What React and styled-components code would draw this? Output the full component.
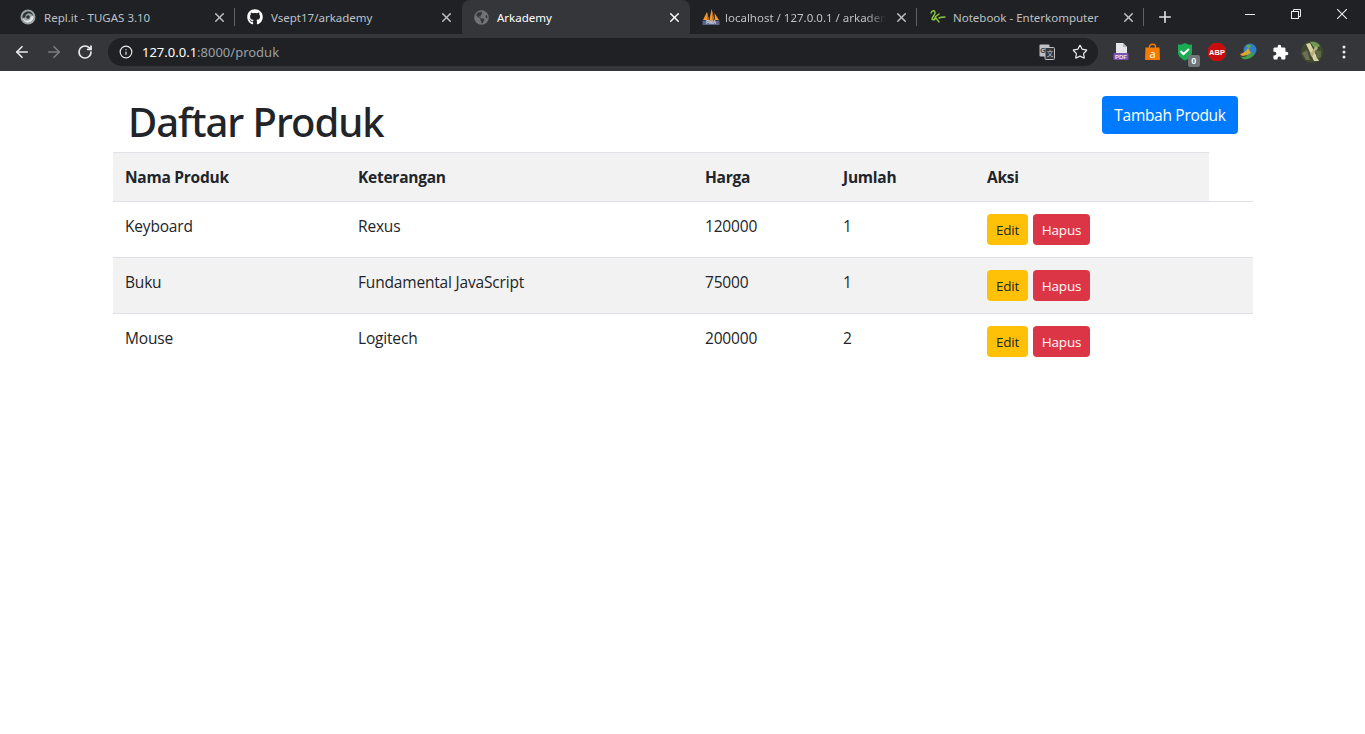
import React from 'react';
import styled, { createGlobalStyle } from 'styled-components';
import { FaGithub, FaGlobeAmericas } from 'react-icons/fa';
import { ArrowLeft, ArrowRight, RotateCw, Info, Star, X, Plus } from 'lucide-react';

const GlobalStyle = createGlobalStyle`
  html, body {
    margin: 0;
    padding: 0;
    background: #fff;
  }
  body {
    font-family: "Open Sans", "Liberation Sans", sans-serif;
    color: #212529;
  }
  svg {
    flex-shrink: 0;
  }
`;

const Screen = styled.div`
  height: 734px;
  overflow: hidden;
`;

const TabStrip = styled.div`
  display: flex;
  align-items: stretch;
  height: 34px;
  padding-left: 8px;
  background: #202124;
`;

const Tab = styled.div`
  display: flex;
  align-items: center;
  position: relative;
  box-sizing: border-box;
  width: ${(props) => props.width || 227}px;
  padding: 0 8px 0 12px;
  gap: 8px;
  background: ${(props) => (props.active ? '#35363a' : 'transparent')};
  border-radius: ${(props) => (props.active ? '8px 8px 0 0' : '0')};
  color: ${(props) => (props.active ? '#fff' : '#bdc1c6')};
  font-family: "Noto Sans", sans-serif;
  font-size: 11.5px;
  &::after {
    content: '';
    display: ${(props) => (props.divider ? 'block' : 'none')};
    position: absolute;
    right: 0;
    top: 8px;
    bottom: 8px;
    width: 1px;
    background: #5f6368;
  }
`;

const TabTitle = styled.span`
  flex: 1;
  overflow: hidden;
  white-space: nowrap;
  margin-left: ${(props) => props.shift || 0}px;
  mask-image: ${(props) => (props.fade ? 'linear-gradient(to right, #000 88%, transparent 100%)' : 'none')};
`;

const NewTab = styled.div`
  display: flex;
  align-items: center;
  margin-left: 12px;
  color: #dee1e6;
`;

const WindowControls = styled.div`
  display: flex;
  align-items: center;
  margin-left: auto;
  height: 28px;
  color: #e8eaed;
`;

const WindowButton = styled.div`
  display: flex;
  align-items: center;
  justify-content: center;
  width: 46px;
`;

const Toolbar = styled.div`
  display: flex;
  align-items: center;
  box-sizing: border-box;
  height: 37px;
  padding: 0 0 1px 13px;
  background: #35363a;
`;

const NavIcons = styled.div`
  display: flex;
  align-items: center;
  gap: 14px;
  color: #e8eaed;
  width: 95px;
`;

const Omnibox = styled.div`
  display: flex;
  align-items: center;
  box-sizing: border-box;
  width: 990px;
  height: 28px;
  padding: 0 10px 0 11px;
  border-radius: 14px;
  background: #202124;
  color: #e8eaed;
`;

const Url = styled.div`
  flex: 1;
  margin-left: 9px;
  font-family: "Noto Sans", sans-serif;
  font-size: 13px;
  color: #fff;
  span {
    color: #9aa0a6;
  }
`;

const OmniActions = styled.div`
  display: flex;
  align-items: center;
  gap: 17px;
`;

const Extensions = styled.div`
  display: flex;
  align-items: center;
  gap: 13.85px;
  margin-left: 14px;
`;

const Extension = styled.div`
  position: relative;
  display: flex;
  width: 18px;
  height: 18px;
  align-items: center;
  justify-content: center;
  color: #fff;
`;

const Badge = styled.span`
  position: absolute;
  right: -6px;
  bottom: -6px;
  width: 12px;
  height: 12px;
  border-radius: 2px;
  background: #70757a;
  color: #fff;
  font: 700 9px/12px "Liberation Sans", sans-serif;
  text-align: center;
`;

const Page = styled.main`
  box-sizing: border-box;
  width: 1140px;
  margin: 0 auto 0 113px;
`;

const Header = styled.header`
  display: flex;
  justify-content: space-between;
  align-items: flex-start;
  box-sizing: border-box;
  height: 81px;
  padding: 25px 15px 0 15px;
`;

const Title = styled.h1`
  margin: 2px 0 0;
  font-family: "Noto Sans", "Open Sans", sans-serif;
  font-size: 40px;
  font-weight: 500;
  line-height: 48px;
  letter-spacing: -1.05px;
`;

const Button = styled.button`
  height: ${(props) => (props.small ? 31 : 38)}px;
  width: ${(props) => props.width}px;
  padding: 1px 0 0;
  border: 0;
  border-radius: 4px;
  background: ${(props) => props.bg};
  color: ${(props) => props.fg || '#fff'};
  font-family: inherit;
  font-size: ${(props) => (props.small ? 13.5 : 15.5)}px;
  letter-spacing: ${(props) => (props.small ? -0.2 : -0.3)}px;
  line-height: 1.5;
`;

const Table = styled.table`
  width: 1140px;
  border-collapse: collapse;
  table-layout: fixed;
  font-size: 15.5px;
  line-height: 24px;
  letter-spacing: -0.18px;
`;

const HeadCell = styled.th`
  height: 48px;
  padding: 12px;
  box-sizing: border-box;
  text-align: left;
  font-weight: 700;
  letter-spacing: -0.25px;
  background: #f2f2f2;
  border-top: 1px solid #dee2e6;
  &:empty {
    background: transparent;
    border-top: 0;
  }
`;

const Row = styled.tr`
  background: ${(props) => (props.striped ? '#f2f2f2' : 'transparent')};
`;

const Cell = styled.td`
  height: 56px;
  padding: 12px;
  box-sizing: border-box;
  vertical-align: top;
  border-top: 1px solid #dee2e6;
`;

const Actions = styled.div`
  display: flex;
  gap: 5px;
`;

const ReplIcon = () => (
  <svg width="16" height="16" viewBox="0 0 16 16">
    <circle cx="8" cy="8" r="7.5" fill="#9aa3a6" />
    <path d="M2.5 9C2 4.5 6 2 9 2.6c2.6.5 4 2.4 4 4.4-1-2-3-3-5-2.6C6 4.8 5 6.5 5.6 8 4.6 8.6 3.4 8.8 2.5 9z" fill="#2c3033" />
    <path d="M13.5 7c.5 4.5-3.5 7-6.5 6.4-2.6-.5-4-2.4-4-4.4 1 2 3 3 5 2.6 2-.4 3-2.1 2.4-3.6 1-.6 2.2-.8 3.1-1z" fill="#e4e8e9" />
    <circle cx="8" cy="8" r="1.8" fill="#2c3033" />
  </svg>
);

const PmaIcon = () => (
  <svg width="18" height="18" viewBox="0 0 18 18">
    <path d="M1 12 5 4l2 8zM7.5 12 9.5 1l3 11zM13 12l-.5-7 4.5 7z" fill="#f29a2a" />
    <path d="M5 4l2 8H5.2zM9.5 1l3 11h-2z" fill="#b5651d" />
    <rect x="0.5" y="12.5" width="17" height="4.5" fill="#5e6285" />
    <text x="9" y="16.4" textAnchor="middle" fill="#dfe1ee" fontSize="4.6" fontWeight="700" fontFamily="Liberation Sans">PMA</text>
  </svg>
);

const NotebookIcon = () => (
  <svg width="18" height="16" viewBox="0 0 18 16" fill="none" stroke="#8cc63f" strokeWidth="1.4" strokeLinecap="round">
    <path d="M2 4c1-3 4-3 4 0 0 2-3 4-3 6 0 1 2 .5 3-.5M5 11l2-2 3 4M6 8l4-3M10 9c2-1 4-1 6-1" />
  </svg>
);

const PdfIcon = () => (
  <svg width="16" height="18" viewBox="0 0 16 18">
    <path d="M3 0h7l4 4v7H3z" fill="#e6e6ea" />
    <path d="M10 0l4 4h-4z" fill="#b8b8c0" />
    <rect x="0.5" y="10" width="15" height="7" rx="1" fill="#7b52ab" />
    <text x="8" y="15.7" textAnchor="middle" fill="#e9e4f4" fontSize="6" fontWeight="700" fontFamily="Liberation Sans">PDF</text>
  </svg>
);

const BagIcon = () => (
  <svg width="17" height="18" viewBox="0 0 17 18">
    <path d="M1.5 4.5h14L16 17H1z" fill="#f57c00" />
    <path d="M5.5 6V3.5c0-3 6-3 6 0V6" stroke="#f57c00" strokeWidth="1.3" fill="none" />
    <text x="8.5" y="14.5" textAnchor="middle" fill="#fff" fontSize="11" fontFamily="Open Sans">a</text>
  </svg>
);

const ShieldIcon = () => (
  <svg width="16" height="18" viewBox="0 0 16 18">
    <path d="M1 1.5C5 2 6 1 8 0c2 1 3 2 7 1.5v8c0 4-4 6.5-7 8-3-1.500-7-4-7-8z" fill="#19ad53" />
    <path d="m3.500 8 3 3 5.500-5" stroke="#fff" strokeWidth="2.2" fill="none" />
  </svg>
);

const AbpIcon = () => (
  <svg width="18" height="18" viewBox="0 0 18 18">
    <path d="M5 0h8l5 5v8l-5 5H5l-5-5V5z" fill="#c70d0d" />
    <text x="9" y="12" textAnchor="middle" fill="#fff" fontSize="7.5" fontWeight="700" fontFamily="Liberation Sans">ABP</text>
  </svg>
);

const IdmIcon = () => (
  <svg width="18" height="18" viewBox="0 0 18 18">
    <circle cx="11" cy="7" r="6.5" fill="#2f7fc8" />
    <path d="M7 3c2-2 4-1 5 0l-2 3z" fill="#5fae3d" />
    <path d="M1 11c4-1 6-3 8-6l3 5c-3 2-6 3-9 3z" fill="#d9a62e" />
    <path d="M2 14c4 0 8-1 11-5l2 3c-3 4-8 5-11 4z" fill="#43a047" />
    <path d="M1 11l2 2-1 1z" fill="#c6322b" />
  </svg>
);

const PuzzleIcon = () => (
  <svg width="17" height="17" viewBox="0 0 24 24" fill="#fff">
    <path d="M20.5 11H19V7c0-1.1-.9-2-2-2h-4V3.5C13 2.12 11.88 1 10.5 1S8 2.12 8 3.5V5H4c-1.1 0-1.99.9-1.99 2v3.8H3.5c1.49 0 2.7 1.21 2.7 2.7s-1.21 2.7-2.7 2.7H2V20c0 1.1.9 2 2 2h3.8v-1.5c0-1.49 1.21-2.7 2.7-2.7 1.49 0 2.7 1.21 2.7 2.7V22H17c1.1 0 2-.9 2-2v-4h1.5c1.38 0 2.5-1.12 2.5-2.5S21.88 11 20.5 11z" />
  </svg>
);

const Avatar = () => (
  <svg width="22" height="22" viewBox="0 0 22 22">
    <circle cx="11" cy="11" r="11" fill="#3f4a2e" />
    <path d="M9 1c3-1 8 0 10 4l-5 3z" fill="#6f9a55" />
    <path d="M5 3l8 17h5L9 2z" fill="#d9d2a6" />
    <path d="M15 5l-6 8 2 3 6-9z" fill="#b8ae80" />
    <path d="M1 12l5-3 3 10-4 0z" fill="#6e6f55" />
    <path d="M14 9l6 1 0 6-4 2z" fill="#5f6a45" />
  </svg>
);

const MenuIcon = () => (
  <svg width="4" height="14" viewBox="0 0 4 14" fill="#e8eaed">
    <circle cx="2" cy="2" r="1.5" />
    <circle cx="2" cy="7" r="1.5" />
    <circle cx="2" cy="12" r="1.5" />
  </svg>
);

const TranslateIcon = () => (
  <svg width="16" height="16" viewBox="0 0 16 16">
    <rect x="0.5" y="0.5" width="10" height="12" rx="1" fill="#bdc1c6" />
    <rect x="6" y="3.5" width="9.5" height="12" rx="1" fill="#35363a" stroke="#bdc1c6" />
    <text x="4" y="9" textAnchor="middle" fontSize="7" fontWeight="700" fill="#35363a" fontFamily="Liberation Sans">G</text>
    <text x="11" y="12" textAnchor="middle" fontSize="6.5" fill="#bdc1c6" fontFamily="Noto Sans CJK SC">文</text>
  </svg>
);

const MinimizeIcon = () => (
  <svg width="10" height="10" viewBox="0 0 10 10" stroke="currentColor">
    <path d="M0 5.5h10" />
  </svg>
);

const RestoreIcon = () => (
  <svg width="10" height="10" viewBox="0 0 10 10" fill="none" stroke="currentColor">
    <path d="M2.5 2.5V.5h7v7h-2" />
    <rect x="0.5" y="2.5" width="7" height="7" />
  </svg>
);

const CloseIcon = () => (
  <svg width="10" height="10" viewBox="0 0 10 10" stroke="currentColor" strokeWidth="1.1">
    <path d="M0 0l10 10M10 0 0 10" />
  </svg>
);

const products = [
  { name: 'Keyboard', note: 'Rexus', price: 120000, qty: 1 },
  { name: 'Buku', note: 'Fundamental JavaScript', price: 75000, qty: 1 },
  { name: 'Mouse', note: 'Logitech', price: 200000, qty: 2 },
];

const tabs = [
  { title: 'Repl.it - TUGAS 3.10', icon: <ReplIcon />, divider: true },
  { title: 'Vsept17/arkademy', icon: <FaGithub size={16} color="#fff" /> },
  { title: 'Arkademy', icon: <FaGlobeAmericas size={15} color="#6f7277" />, active: true, width: 228 },
  { title: 'localhost / 127.0.0.1 / arkademy', icon: <PmaIcon />, divider: true, fade: true, shift: -3 },
  { title: 'Notebook - Enterkomputer', icon: <NotebookIcon />, divider: true, shift: -2 },
];

function App() {
  return (
    <Screen>
      <GlobalStyle />
      <TabStrip>
        {tabs.map((tab) => (
          <Tab key={tab.title} active={tab.active} divider={tab.divider} width={tab.width}>
            {tab.icon}
            <TabTitle fade={tab.fade} shift={tab.shift}>{tab.title}</TabTitle>
            <X size={15} strokeWidth={2.4} />
          </Tab>
        ))}
        <NewTab>
          <Plus size={18} strokeWidth={2.2} />
        </NewTab>
        <WindowControls>
          <WindowButton>
            <MinimizeIcon />
          </WindowButton>
          <WindowButton>
            <RestoreIcon />
          </WindowButton>
          <WindowButton>
            <CloseIcon />
          </WindowButton>
        </WindowControls>
      </TabStrip>
      <Toolbar>
        <NavIcons>
          <ArrowLeft size={18} strokeWidth={2.2} />
          <ArrowRight size={18} strokeWidth={2.2} color="#7c7e82" />
          <RotateCw size={16} strokeWidth={2.6} />
        </NavIcons>
        <Omnibox>
          <Info size={14} strokeWidth={2} />
          <Url>
            127.0.0.1<span>:8000/produk</span>
          </Url>
          <OmniActions>
            <TranslateIcon />
            <Star size={16} strokeWidth={1.8} />
          </OmniActions>
        </Omnibox>
        <Extensions>
          <Extension><PdfIcon /></Extension>
          <Extension><BagIcon /></Extension>
          <Extension>
            <ShieldIcon />
            <Badge>0</Badge>
          </Extension>
          <Extension><AbpIcon /></Extension>
          <Extension><IdmIcon /></Extension>
          <Extension><PuzzleIcon /></Extension>
          <Extension><Avatar /></Extension>
          <Extension><MenuIcon /></Extension>
        </Extensions>
      </Toolbar>
      <Page>
        <Header>
          <Title>Daftar Produk</Title>
          <Button bg="#007bff" width={136}>Tambah Produk</Button>
        </Header>
        <Table>
          <colgroup>
            <col width="233" />
            <col width="347" />
            <col width="138" />
            <col width="144" />
            <col width="234" />
            <col width="44" />
          </colgroup>
          <thead>
            <tr>
              <HeadCell>Nama Produk</HeadCell>
              <HeadCell>Keterangan</HeadCell>
              <HeadCell>Harga</HeadCell>
              <HeadCell>Jumlah</HeadCell>
              <HeadCell>Aksi</HeadCell>
              <HeadCell />
            </tr>
          </thead>
          <tbody>
            {products.map((item, i) => (
              <Row key={item.name} striped={i % 2 === 1}>
                <Cell>{item.name}</Cell>
                <Cell>{item.note}</Cell>
                <Cell>{item.price}</Cell>
                <Cell>{item.qty}</Cell>
                <Cell colSpan={2}>
                  <Actions>
                    <Button small bg="#ffc107" fg="#212529" width={41}>Edit</Button>
                    <Button small bg="#dc3545" width={57}>Hapus</Button>
                  </Actions>
                </Cell>
              </Row>
            ))}
          </tbody>
        </Table>
      </Page>
    </Screen>
  );
}

export default App;
